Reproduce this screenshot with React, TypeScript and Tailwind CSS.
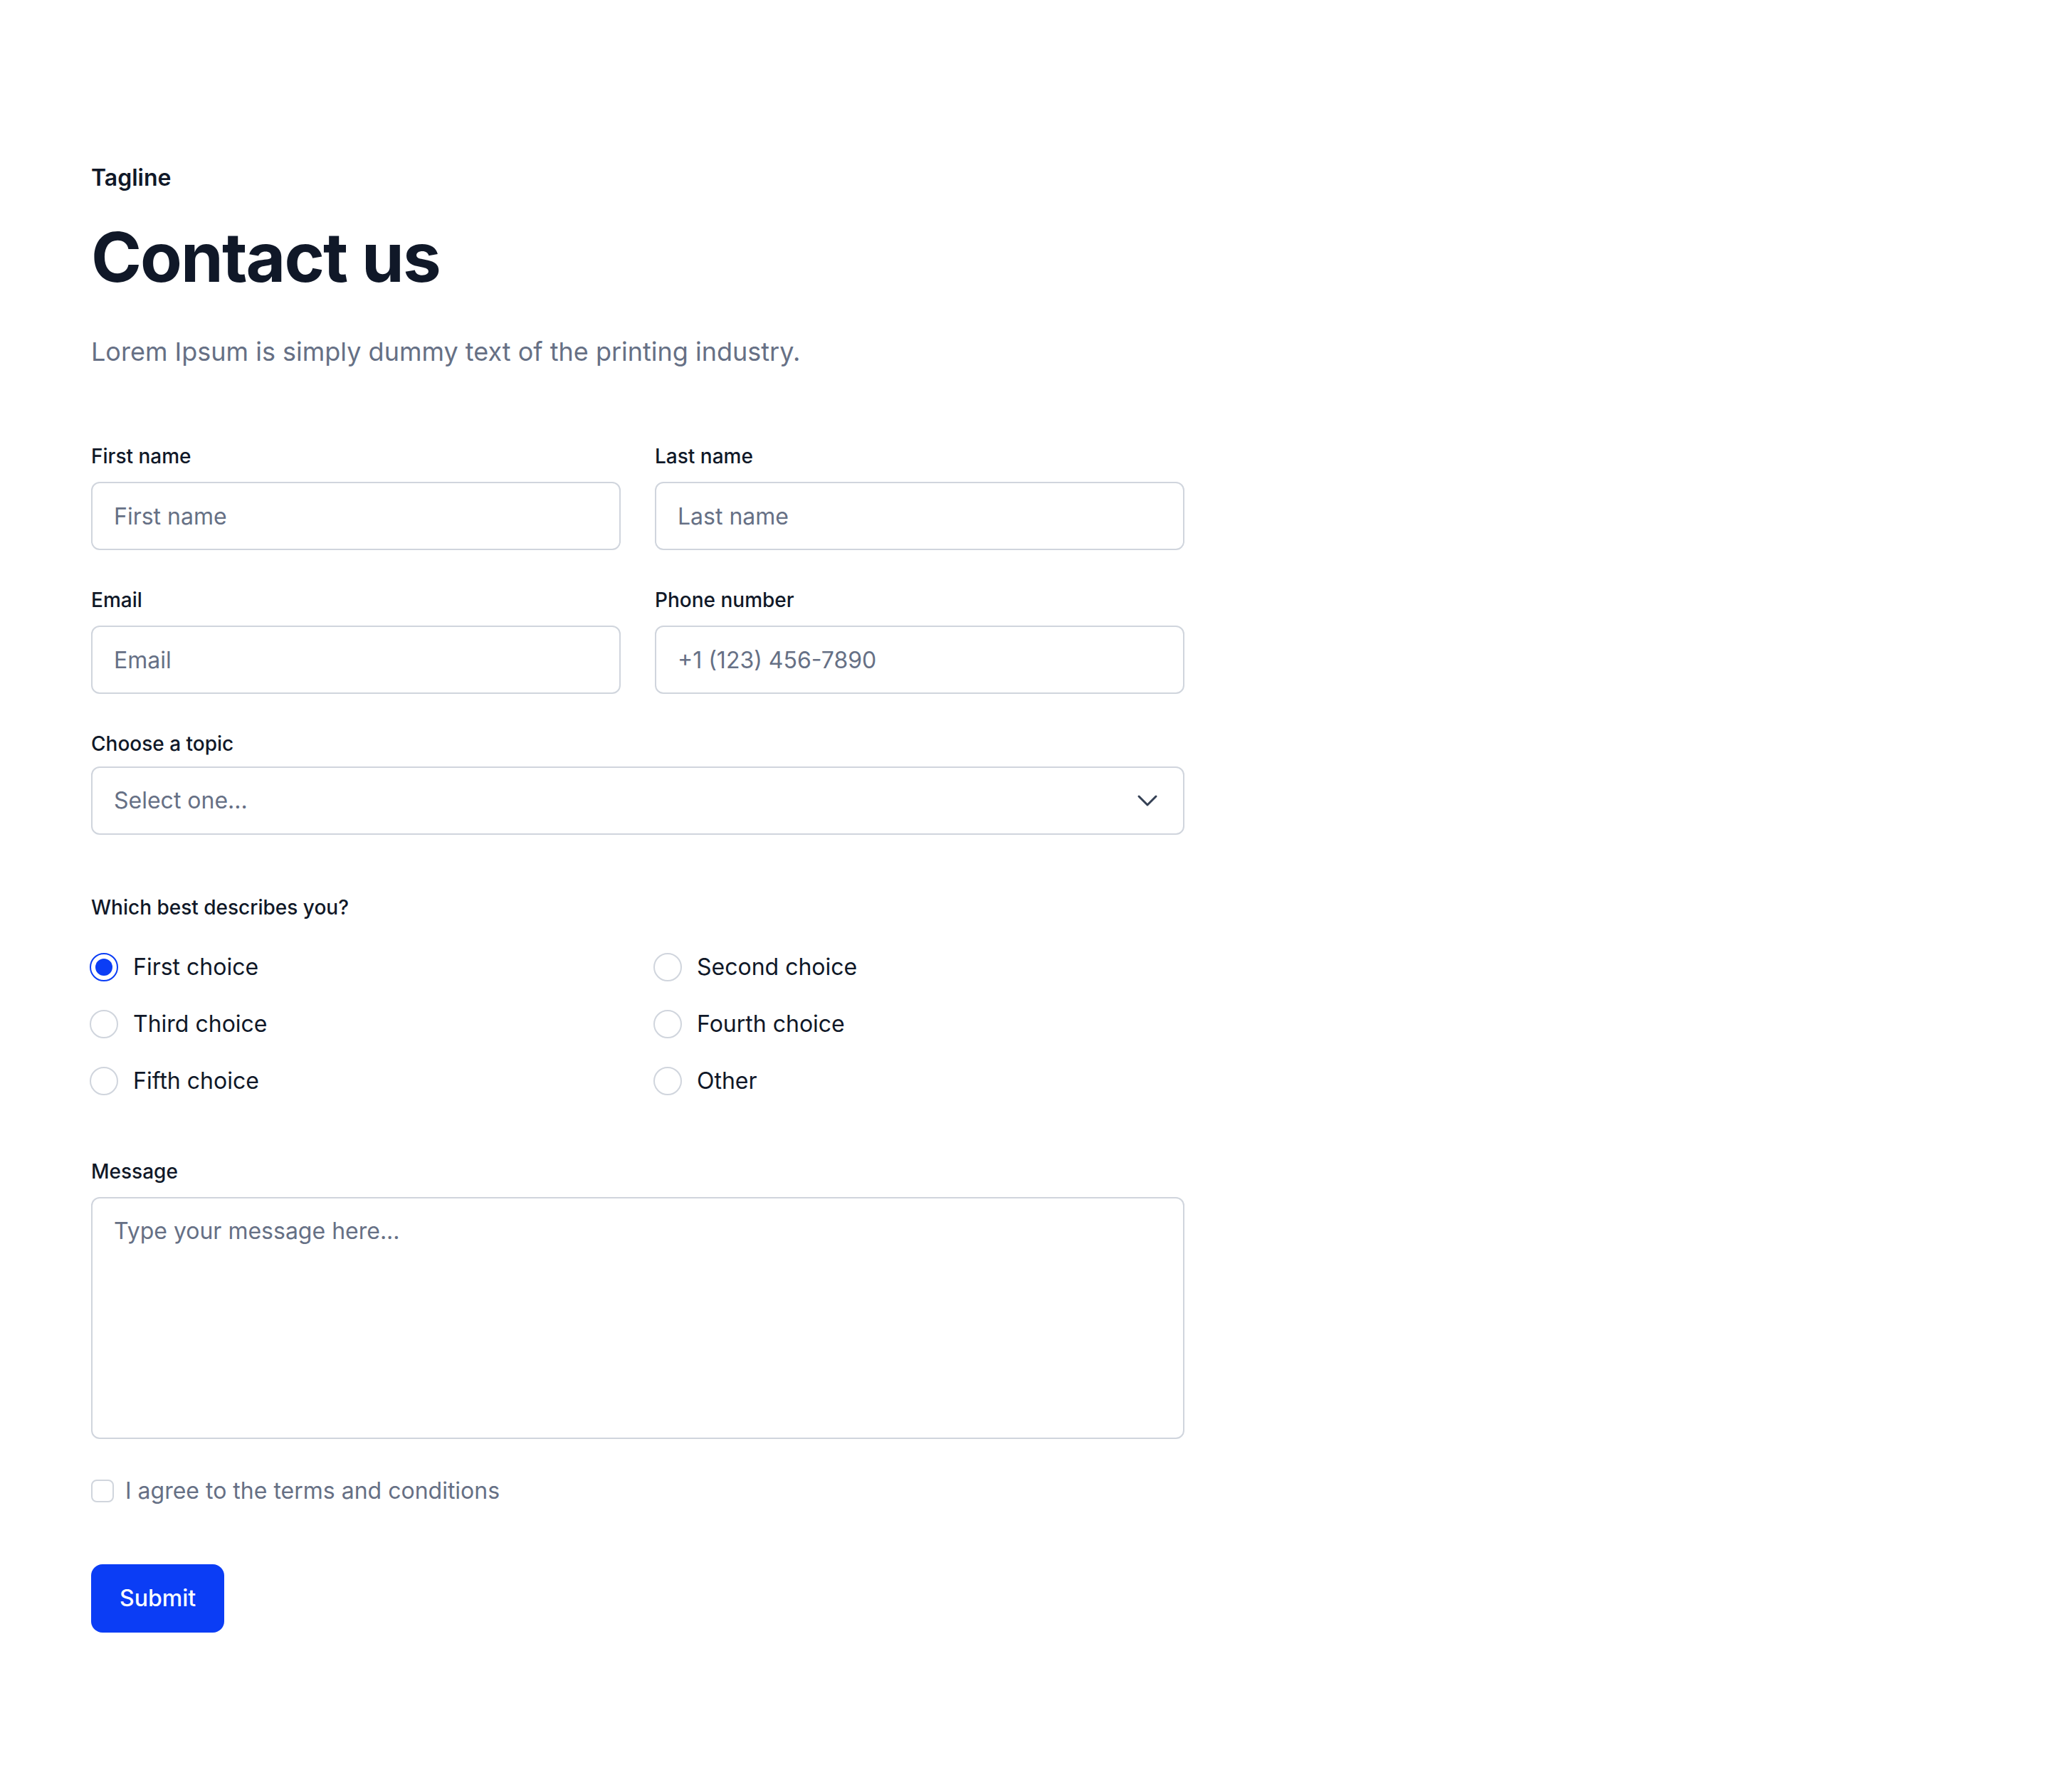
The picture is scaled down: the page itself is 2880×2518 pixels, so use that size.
import {ChevronDown} from "lucide-react";
import {useState} from "react";

const choices = [
    "First choice",
    "Second choice",
    "Third choice",
    "Fourth choice",
    "Fifth choice",
    "Other",
];

function Field({label, placeholder}: { label: string; placeholder: string }) {
    return (
        <div className="flex flex-col">
            <label className="text-[28px] leading-[40px] font-medium text-[#101828] mb-[16px]">{label}</label>
            <input
                type="text"
                placeholder={placeholder}
                className="h-[96px] w-full rounded-[12px] border-2 border-[#d0d5dd] bg-white px-[30px] text-[32px] text-[#101828] placeholder:text-[#667085] outline-none"
            />
        </div>
    );
}

export default function App() {
    const [selected, setSelected] = useState("First choice");
    const [agree, setAgree] = useState(false);

    return (
        <div className="min-h-screen bg-white font-['Inter',sans-serif]">
            <section className="px-[128px] pt-[226px] pb-[224px]">
                <div className="w-[1536px]">
                    {/* Header */}
                    <p className="text-[32px] leading-[48px] font-semibold text-[#101828]">Tagline</p>
                    <h1 className="mt-[30px] text-[96px] leading-[115px] font-bold tracking-[-0.02em] text-[#101828]">
                        Contact us
                    </h1>
                    <p className="mt-[48px] text-[36px] leading-[54px] text-[#667085]">
                        Lorem Ipsum is simply dummy text of the printing industry.
                    </p>

                    {/* Form */}
                    <form className="mt-[100px] flex flex-col" onSubmit={(e) => e.preventDefault()}>
                        <div className="grid grid-cols-2 gap-x-[48px] gap-y-[50px]">
                            <Field label="First name" placeholder="First name"/>
                            <Field label="Last name" placeholder="Last name"/>
                            <Field label="Email" placeholder="Email"/>
                            <Field label="Phone number" placeholder="+1 (123) 456-7890"/>
                        </div>

                        {/* Topic */}
                        <div className="mt-[50px] flex flex-col">
                            <label className="text-[28px] leading-[40px] font-medium text-[#101828] mb-[12px]">Choose a topic</label>
                            <div className="relative">
                                <select
                                    defaultValue=""
                                    className="h-[96px] w-full appearance-none rounded-[12px] border-2 border-[#d0d5dd] bg-white px-[30px] text-[32px] text-[#667085] outline-none"
                                >
                                    <option value="" disabled>Select one...</option>
                                    <option value="general">General</option>
                                    <option value="support">Support</option>
                                </select>
                                <ChevronDown
                                    className="pointer-events-none absolute right-[28px] top-1/2 -translate-y-1/2 w-[48px] h-[48px] text-[#344054]"
                                    strokeWidth={1.5}
                                />
                            </div>
                        </div>

                        {/* Radio group */}
                        <fieldset className="mt-[82px]">
                            <legend className="text-[28px] leading-[40px] font-medium text-[#101828]">Which best describes you?</legend>
                            <div className="mt-[40px] grid grid-cols-2 gap-x-[48px] gap-y-[32px]">
                                {choices.map((c) => (
                                    <label key={c} className="flex items-center gap-[21px] h-[48px] cursor-pointer"
                                           onClick={() => setSelected(c)}>
                                        {selected === c ? (
                                            <span
                                                className="w-[40px] h-[40px] rounded-full border-2 border-[#0b3df5] flex items-center justify-center -ml-[2px]">
                                                <span className="w-[24px] h-[24px] rounded-full bg-[#0b3df5]"></span>
                                            </span>
                                        ) : (
                                            <span className="w-[40px] h-[40px] rounded-full border-2 border-[#d0d5dd] -ml-[2px]"></span>
                                        )}
                                        <span className="text-[32px] leading-[48px] text-[#101828]">{c}</span>
                                    </label>
                                ))}
                            </div>
                        </fieldset>

                        {/* Message */}
                        <div className="mt-[83px] flex flex-col">
                            <label className="text-[28px] leading-[40px] font-medium text-[#101828] mb-[16px]">Message</label>
                            <textarea
                                placeholder="Type your message here..."
                                className="h-[340px] w-full resize-none rounded-[12px] border-2 border-[#d0d5dd] bg-white px-[30px] py-[22px] text-[32px] leading-[48px] text-[#101828] placeholder:text-[#667085] outline-none"
                            />
                        </div>

                        {/* Terms */}
                        <label className="mt-[49px] flex items-center gap-[16px] h-[48px] cursor-pointer"
                               onClick={() => setAgree(!agree)}>
                            <span
                                className={`w-[32px] h-[32px] rounded-[8px] border-2 ${agree ? "border-[#0b3df5] bg-[#0b3df5]" : "border-[#d0d5dd] bg-white"}`}></span>
                            <span className="text-[32px] leading-[48px] text-[#667085]">I agree to the terms and conditions</span>
                        </label>

                        <div className="mt-[79px]">
                            <button
                                type="submit"
                                className="h-[96px] px-[40px] rounded-[16px] bg-[#0b3df5] text-[32px] font-medium text-white"
                            >
                                Submit
                            </button>
                        </div>
                    </form>
                </div>
            </section>
        </div>
    );
}
